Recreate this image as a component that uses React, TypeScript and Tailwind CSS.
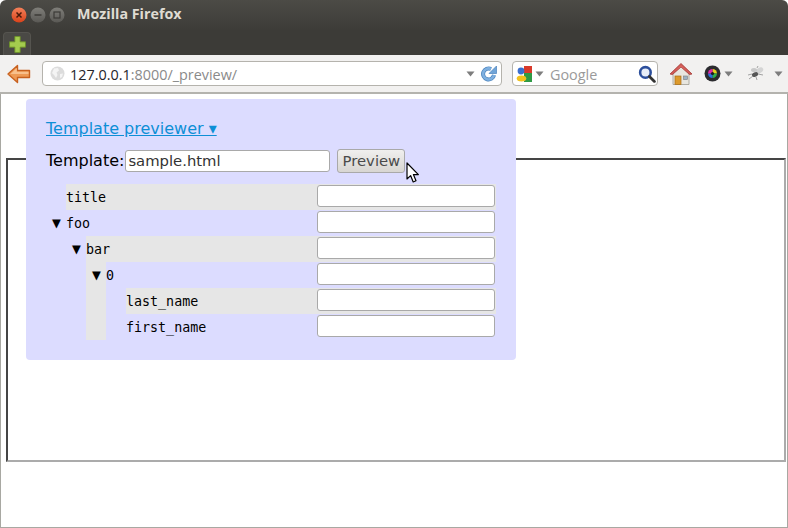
import React from 'react';

const DropArrow = () => (
  <svg width="9" height="6" viewBox="0 0 9 6" className="shrink-0">
    <path d="M0.5 0.5H8.5L4.5 5.5Z" fill="#7d7d7d" />
  </svg>
);

const WindowButton = ({ kind }: { kind: 'close' | 'min' | 'max' }) => (
  <svg width="16" height="16" viewBox="0 0 16 16" className="shrink-0">
    <defs>
      <linearGradient id="closeGrad" x1="0" y1="0" x2="0" y2="1">
        <stop offset="0" stopColor="#f4815a" />
        <stop offset="1" stopColor="#d9421a" />
      </linearGradient>
      <linearGradient id="greyGrad" x1="0" y1="0" x2="0" y2="1">
        <stop offset="0" stopColor="#7f7e79" />
        <stop offset="1" stopColor="#5a5955" />
      </linearGradient>
    </defs>
    <circle cx="8" cy="8" r="7.5" fill={kind === 'close' ? 'url(#closeGrad)' : 'url(#greyGrad)'} />
    {kind === 'close' && <path d="M5.5 5.5L10.5 10.5M10.5 5.5L5.5 10.5" stroke="#4a1a0a" strokeWidth="1.5" />}
    {kind === 'min' && <path d="M4.5 8H11.5" stroke="#3c3b37" strokeWidth="1.5" />}
    {kind === 'max' && <rect x="5" y="5" width="6" height="6" fill="none" stroke="#3c3b37" strokeWidth="1.2" />}
  </svg>
);

const BackArrow = () => (
  <svg width="24" height="20" viewBox="0 0 24 20" className="shrink-0">
    <path
      d="M10.5 1.5L1 10L10.5 18.5V13.5H22.5V6.5H10.5Z"
      fill="#ee9a55"
      stroke="#c8611f"
      strokeWidth="1.4"
      strokeLinejoin="round"
    />
    <path d="M9.8 7.8H21.5V10H3.5L9.8 4Z" fill="#f8c08c" />
  </svg>
);

const Globe = () => (
  <svg width="15" height="15" viewBox="0 0 15 15" className="shrink-0">
    <circle cx="7.5" cy="7.5" r="7" fill="#dcdcdc" />
    <path d="M4 2.5L8 2L9 4.5L6.5 6.5L7.5 9L6 12L4 9L2 7Z" fill="#f4f4f4" />
    <path d="M10 8L13 7.5L12 11L10 12Z" fill="#f4f4f4" />
  </svg>
);

const Reload = () => (
  <svg width="17" height="17" viewBox="0 0 17 17" className="shrink-0">
    <path d="M14 10A5.5 5.5 0 1 1 11 4" fill="none" stroke="#4a83bd" strokeWidth="4" />
    <path d="M14 10A5.5 5.5 0 1 1 11 4" fill="none" stroke="#7fb0e0" strokeWidth="2.6" />
    <path d="M16.5 1V8.5H9Z" fill="#6fa4d8" stroke="#4a83bd" strokeWidth="0.7" strokeLinejoin="round" />
  </svg>
);

const GoogleMark = () => (
  <svg width="16" height="16" viewBox="0 0 16 16" className="shrink-0">
    <rect x="8" y="0" width="8" height="7" fill="#d93a2b" />
    <rect x="8" y="7" width="8" height="9" fill="#2f9a45" />
    <circle cx="5" cy="5" r="3.4" fill="#3b6fd0" />
    <ellipse cx="5.5" cy="12.5" rx="4.8" ry="3" fill="#f2c21d" />
  </svg>
);

const SearchGlass = () => (
  <svg width="18" height="18" viewBox="0 0 17 17" className="shrink-0">
    <circle cx="7" cy="7" r="5" fill="#e8eef8" stroke="#2c4f9c" strokeWidth="2.4" />
    <path d="M10.8 10.8L15.5 15.5" stroke="#333" strokeWidth="2.6" strokeLinecap="round" />
  </svg>
);

const HomeIcon = () => (
  <svg width="24" height="24" viewBox="0 0 24 24" className="shrink-0">
    <path d="M4 11V22.5H20V11L12 4Z" fill="#e8e6df" stroke="#a09d92" strokeWidth="0.8" />
    <rect x="6" y="14" width="6" height="8.5" fill="#dd9a2b" stroke="#a96c14" strokeWidth="0.7" />
    <rect x="14.5" y="14" width="4" height="3.6" fill="#9cb2c4" stroke="#7d7d7d" strokeWidth="0.6" />
    <path d="M1 12L12 1.5L23 12L20.5 12.5L12 5L3.5 12.5Z" fill="#cf5a55" stroke="#a53a36" strokeWidth="0.8" strokeLinejoin="round" />
    <path d="M4 10.5L12 3L20 10.5L12 5Z" fill="#d9635e" />
  </svg>
);

const ColorWheel = () => (
  <svg width="17" height="17" viewBox="0 0 17 17" className="shrink-0">
    <circle cx="8.5" cy="8.5" r="8" fill="#2b2b2f" />
    <path d="M8.5 4A4.5 4.5 0 0 1 13 8.5H8.5Z" fill="#e8d21d" />
    <path d="M13 8.5A4.5 4.5 0 0 1 8.5 13V8.5Z" fill="#2fb04a" />
    <path d="M8.5 13A4.5 4.5 0 0 1 4 8.5H8.5Z" fill="#2a6fe0" />
    <path d="M4 8.5A4.5 4.5 0 0 1 8.5 4V8.5Z" fill="#e02aa8" />
    <circle cx="8.5" cy="8.5" r="1.6" fill="#1c1c1f" />
  </svg>
);

const BugIcon = () => (
  <svg width="18" height="15" viewBox="0 0 18 15" className="shrink-0">
    <ellipse cx="12.5" cy="4.5" rx="4" ry="2.6" fill="#d4d4d4" transform="rotate(-30 12.5 4.5)" />
    <ellipse cx="7" cy="4" rx="3" ry="2" fill="#c8c8c8" />
    <ellipse cx="8" cy="8.5" rx="3.2" ry="2.2" fill="#555" transform="rotate(-25 8 8.5)" />
    <path d="M1 9L5 8M2 13L6 10M9 11L10 14M11 8L16 9M10 2L11 0" stroke="#999" strokeWidth="0.9" />
  </svg>
);

const Cursor = () => (
  <svg width="14" height="22" viewBox="0 0 14 22">
    <path
      d="M1 1V17L4.6 13.6L7.2 20L10 18.8L7.4 12.6H12.4Z"
      fill="#fff"
      stroke="#000"
      strokeWidth="1.2"
      strokeLinejoin="round"
    />
  </svg>
);

const FieldInput = () => (
  <input className="w-[178px] h-[22px] mt-px shrink-0 bg-white border border-[#a9a9a9] rounded-[3px]" />
);

const Row = ({ label, open, shaded }: { label: string; open?: boolean; shaded?: boolean }) => (
  <div className={`relative flex h-[26px] pr-px ${shaded ? 'bg-[#e6e6e6]' : ''}`}>
    {open && <span className="absolute left-[-14px] top-[6px] text-[11.5px] leading-[14px] text-black">▼</span>}
    <span className="flex-1 leading-[27px] text-[13.33px] text-black font-['DejaVu_Sans_Mono',monospace]">
      {label}
    </span>
    <FieldInput />
  </div>
);

export default function App() {
  return (
    <div className="w-[788px] h-[528px] flex flex-col overflow-hidden bg-white font-['DejaVu_Sans',sans-serif]">
      {/* Window title bar */}
      <div className="h-[30px] shrink-0 flex items-center pl-[11px] rounded-t-[6px] bg-gradient-to-b from-[#4c4b46] to-[#3d3c38]">
        <div className="flex gap-[3px]">
          <WindowButton kind="close" />
          <WindowButton kind="min" />
          <WindowButton kind="max" />
        </div>
        <span className="ml-[12px] mb-[2px] text-[14.3px] font-bold text-[#dfdbd2] font-['Open_Sans',sans-serif]">
          Mozilla Firefox
        </span>
      </div>

      {/* Tab strip */}
      <div className="h-[25px] shrink-0 flex items-end pl-[3px] bg-[#3c3b37]">
        <div className="w-[28px] h-[23px] flex items-center justify-center rounded-t-[4px] border border-b-0 border-[#55544f] bg-[#4a4945]">
          <svg width="17" height="17" viewBox="0 0 16 16">
            <path
              d="M5.5 0.5H10.5V5.5H15.5V10.5H10.5V15.5H5.5V10.5H0.5V5.5H5.5Z"
              fill="#a4cc4e"
              stroke="#6d9228"
              strokeWidth="0.8"
            />
          </svg>
        </div>
      </div>

      {/* Navigation toolbar */}
      <div className="h-[39px] shrink-0 flex items-center pl-[7px] pr-[4px] bg-[#f2f1f0] border-b-2 border-[#b4b3ae]">
        <BackArrow />
        <div className="ml-[11px] w-[460px] h-[25px] flex items-center pl-[7px] pr-[4px] bg-white border border-[#b5b3ad] rounded-[4px]">
          <Globe />
          <span className="ml-[5px] mt-[2px] flex-1 text-[14.4px] text-[#25252a] font-['Open_Sans',sans-serif]">
            127.0.0.1<span className="text-[#8a8a8a]">:8000/_preview/</span>
          </span>
          <DropArrow />
          <span className="ml-[5px] flex">
            <Reload />
          </span>
        </div>
        <div className="ml-[10px] w-[146px] h-[25px] flex items-center pl-[3px] pr-px bg-white border border-[#b5b3ad] rounded-[4px]">
          <GoogleMark />
          <span className="ml-[3px] flex">
            <DropArrow />
          </span>
          <span className="ml-[6px] mt-[2px] flex-1 text-[14.4px] text-[#9a9a9a] font-['Open_Sans',sans-serif]">Google</span>
          <SearchGlass />
        </div>
        <span className="ml-[11px] flex">
          <HomeIcon />
        </span>
        <span className="ml-[11px] flex">
          <ColorWheel />
        </span>
        <span className="ml-[3px] flex">
          <DropArrow />
        </span>
        <span className="ml-[14px] flex">
          <BugIcon />
        </span>
        <span className="ml-[9px] flex">
          <DropArrow />
        </span>
      </div>

      {/* Page content */}
      <div className="relative flex-1 pt-[64px] pl-[5px] pr-px border-x border-b border-[#a8a8a2]">
        <div className="w-[780px] h-[304px] border-2 border-t-[#454545] border-l-[#454545] border-r-[#ababab] border-b-[#ababab]" />

        {/* Template previewer panel */}
        <div className="absolute left-[25px] top-[5px] w-[490px] h-[261px] p-5 rounded-[4px] bg-[#dcdcff]">
          <a href="#" className="block text-[16px] leading-[20px] underline text-[#0e8fd6]">
            Template previewer ▾
          </a>
          <div className="relative flex items-center mt-[10px] h-[24px] text-[16px] text-black">
            <span>Template:</span>
            <input
              readOnly
              value="sample.html"
              className="ml-px w-[205px] h-[22px] px-[2px] text-[14.8px] text-[#333] bg-white border border-[#a9a9a9] rounded-[3px] outline-none"
            />
            <button className="ml-[7px] w-[68px] h-[24px] text-[14.8px] text-[#4a4a4a] rounded-[3px] border border-[#a9a9a9] bg-gradient-to-b from-[#f0efee] to-[#d8d6d2]">
              Preview
            </button>
            <span className="absolute left-[360px] top-[13px] flex">
              <Cursor />
            </span>
          </div>

          {/* Field tree */}
          <div className="mt-[11px] ml-5">
            <Row label="title" shaded />
            <Row label="foo" open />
            <div className="pl-5">
              <div className="bg-[#e6e6e6]">
                <Row label="bar" open shaded />
                <div className="ml-5 bg-[#dcdcff]">
                  <Row label="0" open />
                  <div className="pl-5">
                    <Row label="last_name" shaded />
                    <Row label="first_name" />
                  </div>
                </div>
              </div>
            </div>
          </div>
        </div>
      </div>
    </div>
  );
}
